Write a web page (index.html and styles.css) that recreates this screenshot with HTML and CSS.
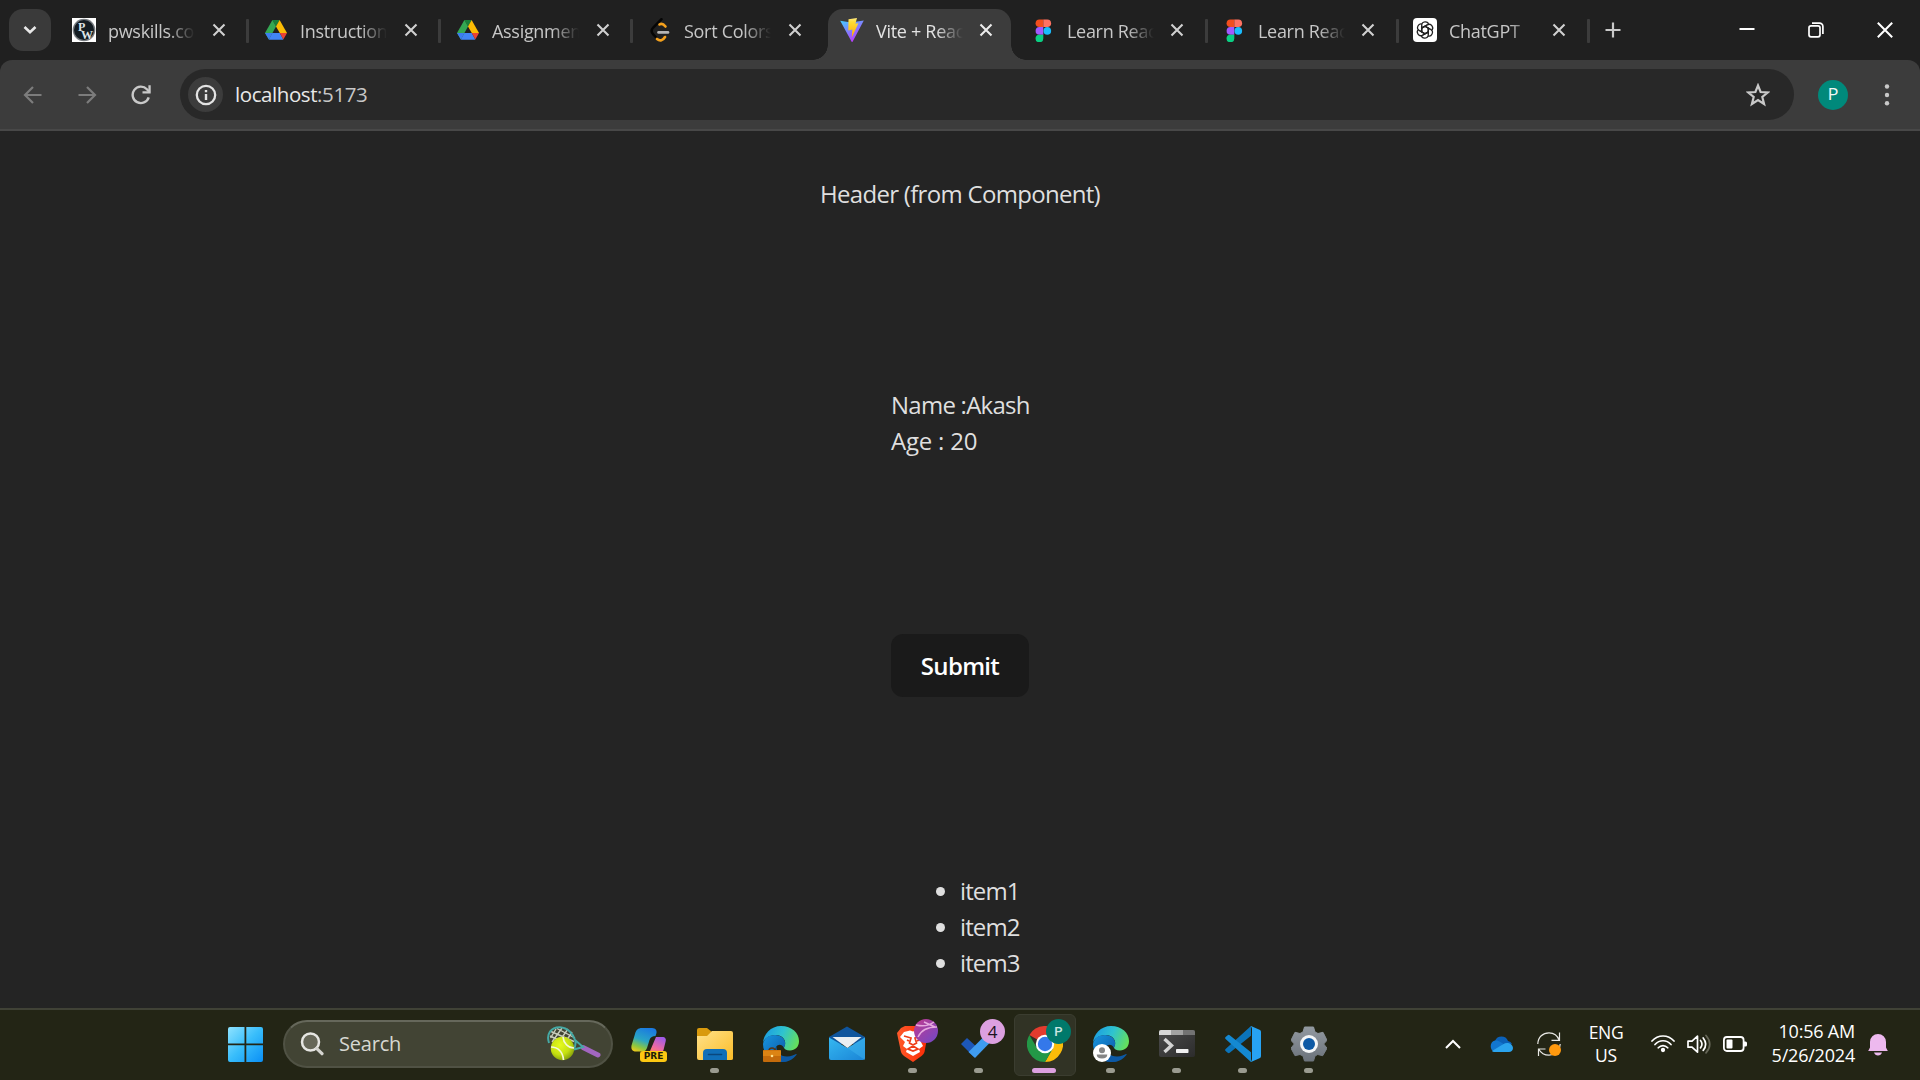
FILE: index.html
```html
<!DOCTYPE html>
<html lang="en">
<head>
<meta charset="utf-8">
<title>Vite + React</title>
<link rel="stylesheet" href="styles.css">
</head>
<body>
<svg class="defs" aria-hidden="true">
  <defs>
    <linearGradient id="win" x1="0" y1="0" x2="1" y2="1"><stop offset="0" stop-color="#8fe3ff"/><stop offset=".5" stop-color="#38bdfb"/><stop offset="1" stop-color="#0a8ff5"/></linearGradient>
    <linearGradient id="viteA" x1="0" y1="0" x2=".6" y2="1"><stop offset="0" stop-color="#41d1ff"/><stop offset="1" stop-color="#bd34fe"/></linearGradient>
    <linearGradient id="viteB" x1="0" y1="0" x2="0" y2="1"><stop offset="0" stop-color="#ffea83"/><stop offset=".2" stop-color="#ffdd35"/><stop offset="1" stop-color="#ffa800"/></linearGradient>
    <linearGradient id="copA" x1=".6" y1="0" x2=".2" y2="1"><stop offset="0" stop-color="#1b7be0"/><stop offset=".5" stop-color="#2aa6c4"/><stop offset=".8" stop-color="#8cc63f"/><stop offset="1" stop-color="#e8c81c"/></linearGradient>
    <linearGradient id="copB" x1=".7" y1="0" x2=".2" y2="1"><stop offset="0" stop-color="#a05be8"/><stop offset=".6" stop-color="#ef6aa0"/><stop offset="1" stop-color="#ff8a50"/></linearGradient>
    <linearGradient id="fold" x1="0" y1="0" x2="1" y2="1"><stop offset="0" stop-color="#ffe18a"/><stop offset="1" stop-color="#fbbd28"/></linearGradient>
    <linearGradient id="edgeTop" x1="0" y1=".3" x2="1" y2=".6"><stop offset="0" stop-color="#1b9de2"/><stop offset=".5" stop-color="#2fc3cf"/><stop offset="1" stop-color="#66e05a"/></linearGradient>
    <linearGradient id="edgeLow" x1="0" y1="0" x2="1" y2="1"><stop offset="0" stop-color="#1796e0"/><stop offset="1" stop-color="#0b4f9e"/></linearGradient>
    <linearGradient id="mail" x1="0" y1="0" x2="1" y2="1"><stop offset="0" stop-color="#35b8f1"/><stop offset="1" stop-color="#1a84d6"/></linearGradient>
    <linearGradient id="brave" x1="0" y1="0" x2="1" y2="0"><stop offset="0" stop-color="#ff5a2a"/><stop offset="1" stop-color="#fb2b05"/></linearGradient>
    <linearGradient id="ball" x1="0" y1="0" x2="1" y2="1"><stop offset="0" stop-color="#c23a8e"/><stop offset="1" stop-color="#7048c8"/></linearGradient>
    <radialGradient id="tennis" cx=".4" cy=".35" r=".7"><stop offset="0" stop-color="#e6fa1e"/><stop offset=".6" stop-color="#c4df10"/><stop offset="1" stop-color="#7f9a0c"/></radialGradient>
    <linearGradient id="gear" x1="0" y1="0" x2="0" y2="1"><stop offset="0" stop-color="#9299a0"/><stop offset="1" stop-color="#6c737b"/></linearGradient>
    <linearGradient id="term" x1="0" y1="0" x2="1" y2="1"><stop offset="0" stop-color="#4c4c4c"/><stop offset="1" stop-color="#2c2c2c"/></linearGradient>
    <symbol id="close" viewBox="0 0 14 14"><path d="M1.500 1.500 12.500 12.500M12.500 1.500 1.500 12.500" fill="none" stroke="currentColor" stroke-width="2.100"/></symbol>
    <symbol id="drive" viewBox="0 0 24 24">
      <path d="M8.400 2.100h7.200L12 8.400z" fill="#188038"/><path d="M8.400 2.100 12 8.400 4.900 21.500 1 15z" fill="#34a853"/>
      <path d="M15.600 2.100 23 15h-7.200L12 8.400z" fill="#fbbc04"/>
      <path d="M8.300 15h7.500l3.500 6.400c-.4.300-.8.400-1.200.4H6.100c-.5 0-.9-.1-1.200-.4z" fill="#4285f4"/>
      <path d="M1 15h7.300L4.900 21.500z" fill="#3c7df0"/><path d="M15.800 15H23l-3.700 6.500z" fill="#ea4335"/>
    </symbol>
    <symbol id="figma" viewBox="0 0 24 24">
      <path d="M12.300 1.500H8.400a3.800 3.800 0 0 0 0 7.600h3.900z" fill="#f24e1e"/><path d="M12.300 1.500h4a3.800 3.800 0 0 1 0 7.600h-4z" fill="#ff7262"/>
      <path d="M12.300 9.100H8.400a3.800 3.800 0 0 0 0 7.600h3.900z" fill="#a259ff"/><circle cx="16.300" cy="12.900" r="3.800" fill="#1abcfe"/>
      <path d="M8.400 16.700h3.900v3.800a3.900 3.800 0 1 1-3.900-3.800z" fill="#0acf83"/>
    </symbol>
    <symbol id="edge" viewBox="0 0 36 36">
      <path d="M0 18C0 8 8 0 18 0c11 0 18 7 18 15 0 6-4 9.500-9 9.500-4 0-6-1.500-6-3 0-1 1.200-1.700 1.200-4.500 0-4-3.700-8-9.200-8C6 9 0 13 0 18z" fill="url(#edgeTop)"/>
      <path d="M0 18C1 12 6 8.900 12 8.900c6 0 10.200 4 10.200 8.300 0 2.800-1.200 3.600-1.200 4.800-2-4-6-4-8-1-3 6 3 14 12 14-2.500 1-5 1-7 1C8 36 0 28 0 18z" fill="url(#edgeLow)"/>
      <path d="M14 20c-1.500 6 3 10.500 10 10.500 4.500 0 7.500-1.700 8.600-2.300.8-.4 1.300.2.800.9C30 33.500 26.500 35.300 22.500 35.800 14 34 10.500 25 14 20z" fill="#0c59a4"/>
    </symbol>
  </defs>
</svg>

<div class="screen">
  <header class="tabstrip">
    <button class="tab-search" aria-label="Search tabs"><svg width="14" height="10" viewBox="0 0 14 10"><path d="M1.500 2 7 7.300 12.500 2" fill="none" stroke="#e8e8e8" stroke-width="2.600"/></svg></button>
    <nav class="tabs">
      <div class="tab"><svg class="fav" viewBox="0 0 24 24"><path fill="#fff" d="M0 0h24v24H0z"/><circle cx="12" cy="12" r="11.300" fill="#777c80"/><circle cx="12" cy="12" r="10" fill="#141c22"/><g class="monogram"><text x="6" y="12.500">P</text><text x="9" y="20.500">W</text></g></svg><span class="label">pwskills.com</span><svg class="x"><use href="#close"/></svg></div>
      <div class="tab"><svg class="fav"><use href="#drive"/></svg><span class="label">Instructions</span><svg class="x"><use href="#close"/></svg></div>
      <div class="tab"><svg class="fav"><use href="#drive"/></svg><span class="label">Assignments</span><svg class="x"><use href="#close"/></svg></div>
      <div class="tab no-sep"><svg class="fav" viewBox="0 0 24 24" fill="none" stroke-linecap="round"><path d="M13.500 1.200 5.200 9.500c-2 2.200-2 4.600 0 6.800l3 3.200" stroke="#050505" stroke-width="2.500"/><path d="M11.500 6.500c2-1.500 4-.5 6 2" stroke="#f5a11c" stroke-width="2.600"/><path d="M9 21c3 2.500 6 1.500 8-2" stroke="#f5a11c" stroke-width="2.600"/><path d="M10.500 14.400H20" stroke="#b5b5b5" stroke-width="2.600"/></svg><span class="label">Sort Colors</span><svg class="x"><use href="#close"/></svg></div>
      <div class="tab narrow active"><svg class="fav" viewBox="0 0 24 24"><path d="M.2 2.800 11 4.500 23.800 2.600 12.700 23.600q-.6 1-1.200 0z" fill="url(#viteA)"/><path d="M8.500 1.200 17 0l-1.600 5.800 3-.5-6.600 14.200.5-7.900-4 .8z" fill="url(#viteB)"/></svg><span class="label">Vite + React</span><svg class="x"><use href="#close"/></svg></div>
      <div class="tab narrow"><svg class="fav"><use href="#figma"/></svg><span class="label">Learn React</span><svg class="x"><use href="#close"/></svg></div>
      <div class="tab narrow"><svg class="fav"><use href="#figma"/></svg><span class="label">Learn React</span><svg class="x"><use href="#close"/></svg></div>
      <div class="tab narrow"><svg class="fav" viewBox="0 0 24 24"><rect width="24" height="24" rx="4" fill="#fff"/><g fill="none" stroke="#222" stroke-width="1.250"><path id="petal" d="M8.700 13.900V7.400c0-4.400 6.300-4.700 6.900-.8M8.700 10.100l3.400-2 5.300 3.100"/><use href="#petal" transform="rotate(60 12 12)"/><use href="#petal" transform="rotate(120 12 12)"/><use href="#petal" transform="rotate(180 12 12)"/><use href="#petal" transform="rotate(240 12 12)"/><use href="#petal" transform="rotate(300 12 12)"/></g></svg><span class="label">ChatGPT</span><svg class="x"><use href="#close"/></svg></div>
    </nav>
    <svg class="new-tab" viewBox="0 0 16 16"><path d="M8 .5v15M.5 8h15" stroke="#c9c9c9" stroke-width="2.200"/></svg>
    <div class="window-controls">
      <svg viewBox="0 0 16 16"><path d="M.5 7h15" stroke="#fff" stroke-width="2"/></svg>
      <svg viewBox="0 0 16 16" fill="none" stroke="#fff" stroke-width="1.700"><rect x="1" y="3.800" width="11" height="11" rx="2"/><path d="M4 1.200h7.500a3.400 3.400 0 0 1 3.400 3.400V12"/></svg>
      <svg viewBox="0 0 16 16"><path d="M.8.8 15.200 15.200M15.200.8.800 15.200" stroke="#fff" stroke-width="2"/></svg>
    </div>
  </header>

  <div class="toolbar">
    <svg class="nav-icon" viewBox="0 0 20 20"><path d="M18.500 10H2.500M10 2 2 10l8 8" fill="none" stroke="#7c7c7c" stroke-width="2.200"/></svg>
    <svg class="nav-icon" viewBox="0 0 20 20"><path d="M1.500 10h16M10 2l8 8-8 8" fill="none" stroke="#7c7c7c" stroke-width="2.200"/></svg>
    <svg class="nav-icon" viewBox="0 0 20 20"><path d="M17.700 12.300A8.200 8.200 0 1 1 15.900 4.300L18.500 7" fill="none" stroke="#c9c9c9" stroke-width="2.400"/><path d="M19.700.3v8.200h-8.200V6.300h5.900V.3z" fill="#c9c9c9"/></svg>
    <div class="omnibox">
      <span class="site-info"><svg width="22" height="22" viewBox="0 0 22 22"><circle cx="11" cy="11" r="9.200" fill="none" stroke="#e3e3e3" stroke-width="2.300"/><path d="M11 10v6M11 6v2.200" stroke="#e3e3e3" stroke-width="2.400"/></svg></span>
      <span class="url">localhost<span class="port">:5173</span></span>
      <svg class="star" viewBox="0 0 24 24"><path d="m12 2.500 2.600 6.500 7.200.5-5.500 4.500 1.800 7-6.100-3.900L5.900 21l1.800-7-5.500-4.500 7.200-.5z" fill="none" stroke="#c9c9c9" stroke-width="2.200"/></svg>
    </div>
    <span class="avatar">P</span>
    <svg class="menu" viewBox="0 0 6 22"><g fill="#c9c9c9"><circle cx="3" cy="2.500" r="2.200"/><circle cx="3" cy="11" r="2.200"/><circle cx="3" cy="19.300" r="2.200"/></g></svg>
  </div>

  <main class="page">
    <div class="page-header">Header (from Component)</div>
    <div class="person"><div>Name :Akash</div><div class="age">Age : 20</div></div>
    <button class="submit">Submit</button>
    <ul class="items"><li>item1</li><li>item2</li><li>item3</li></ul>
  </main>

  <footer class="taskbar">
    <svg class="start" viewBox="0 0 35 35"><path d="M2 0h14.500v16.500H0V2q0-2 2-2zM18.300 0H33q2 0 2 2v14.500H18.300zM0 18.300h16.500V35H2q-2 0-2-2zM18.300 18.300H35V33q0 2-2 2H18.300z" fill="url(#win)"/></svg>
    <div class="search">
      <svg class="magnifier" viewBox="0 0 24 24"><circle cx="10.500" cy="10" r="8.500" fill="#666758" stroke="#e6e6e2" stroke-width="2.500"/><path d="m16.600 16.300 5.400 5.400" stroke="#d5d5d0" stroke-width="3.200" stroke-linecap="round"/></svg>
      <span class="search-text">Search</span>
      <svg class="racket" viewBox="0 0 54 36">
        <path d="m36 21.500 15 7.500" stroke="#a266c0" stroke-width="5" stroke-linecap="round"/>
        <path d="M4 5.500l23 10M3 10l20 9M10 2.500 28 12M5 16 15 2M11 17 21 3M18 17l7-11M3.500 12 9 3" stroke="#c9cdbc" stroke-width="1.400"/>
        <path d="M2 17C-1 8 4 1 13 1.200 21 1.600 26 8 28 14l8 7-9 2.500M28 14c1 3 0 7-1 9" fill="none" stroke="#45a9a5" stroke-width="2"/>
        <circle cx="15.500" cy="22.500" r="11.700" fill="url(#tennis)"/><path d="M4 21c7 0 12 5 12.500 13M16 11c.5 6 5 11 11 11" fill="none" stroke="#f5f8d5" stroke-width="1.700"/>
      </svg>
    </div>
    <div class="apps">
      <div class="app"><svg viewBox="0 0 36 36"><path d="M11 2h10c4 0 5 3 4.500 5l-1 3c-3 0-5 1-6 4l-2.500 8c-1 2.500-2 3.500-5 3.500H5c-4 0-5-2.500-4.500-6L4 8c1-4 3-6 7-6z" fill="url(#copA)"/><path d="M25 11h6c3.500 0 4.500 2 3.500 5l-2 8c-1 3-3 4-6 4H17l2-3z" fill="url(#copB)"/></svg><span class="pre">PRE</span></div>
      <div class="app running"><svg viewBox="0 0 36 36"><path d="M0 4q0-2 2-2h8l5 4-4 5H0z" fill="#d99a0d"/><path d="M0 10h10l5-5h19q2 0 2 2v25.500q0 1.500-2 1.500H2q-2 0-2-2z" fill="url(#fold)"/><path d="M6 34V27q0-4 4-4h16q4 0 4 4v7z" fill="#106fb8"/><path d="M11.500 28.500h13" stroke="#0a477d" stroke-width="1.600" stroke-linecap="round"/></svg></div>
      <div class="app"><svg viewBox="0 0 36 36"><use href="#edge"/><path d="M6 25q0-3 3-3t3 3" fill="none" stroke="#5b3311" stroke-width="1.500"/><rect y="24" width="18" height="12" rx="1" fill="#c46b0b"/><path d="M0 24.500h18V30H0z" fill="#dc8414"/><circle cx="9" cy="30" r="1.300" fill="#ffe08a"/></svg></div>
      <div class="app"><svg viewBox="0 0 36 36"><path d="M18 .5 36 11v7H0v-7z" fill="#0f559d"/><path d="M0 11.500V32q0 2 2 2h32q2 0 2-2V11.500L18.500 22z" fill="url(#mail)"/><path d="M3.500 11h29L18.500 22z" fill="#e9eef2"/><path d="M18.500 22 36 34V11.500z" fill="#40b5f0" opacity=".45"/></svg></div>
      <div class="app running"><svg viewBox="0 0 36 36"><path d="M10 0h13l4 3 4 1 1.500 5-1 6-2 11q-.5 2-3 4L18 36l-9-6q-2.500-2-3-4L3 12 2 7l4-5z" fill="url(#brave)"/><path d="m9 6 6-1.500 3 1 3-1L27 6l3 5-4 5 2 4-4 3 1 3-7 4-7-4 1-3-4-3 2-4-5-5z" fill="#fff"/><path d="m9 10 7 2-1.500 5 3.500 2 3.500-2-1.500-5 6-2M13 23l5-3 5 3-5 2zM12 14l2 1M24 14l-2 1" fill="none" stroke="#ef3d17" stroke-width="1.700"/></svg><svg class="sticker" viewBox="0 0 24 24"><circle cx="12" cy="12" r="12" fill="url(#ball)"/><path d="M2 6c8 2 14 0 18-3M4 18c3-7 9-10 19-10M10 3l11 5" fill="none" stroke="#e6a8df" stroke-width="1.500"/></svg></div>
      <div class="app running"><svg viewBox="0 0 36 36"><path d="m0 18 6-6 13 12-6 7z" fill="#1d57b8"/><path d="M7.500 26 30 3.500l6 5.800L14 32z" fill="#3f9cf0"/></svg><span class="badge">4</span></div>
      <div class="app running current"><svg viewBox="0 0 36 36"><path d="M18 18 2.400 9A18 18 0 0 1 33.600 9z" fill="#e33b2e"/><path d="M18 9h15.600A18 18 0 0 1 18 36l7.800-13.500z" fill="#fbbc09"/><path d="M2.400 9A18 18 0 0 0 18 36l7.800-13.500L18 25l-7.800-2.500z" fill="#239847"/><circle cx="18" cy="18" r="9.200" fill="#fff"/><circle cx="18" cy="18" r="7.200" fill="#3478ea"/></svg><span class="badge profile">P</span></div>
      <div class="app running"><svg viewBox="0 0 36 36"><use href="#edge"/><circle cx="9" cy="27" r="9" fill="#fff"/><circle cx="9" cy="24.300" r="3" fill="#858585"/><path d="M3.700 28.600h10.600q0 4-5.300 4t-5.300-4z" fill="#858585"/></svg></div>
      <div class="app running"><svg viewBox="0 0 36 36"><rect y="4" width="36" height="27" rx="2" fill="url(#term)"/><path d="M0 9V6q0-2 2-2h10v5z" fill="#d6d6d6"/><path d="M12 4h12v5H12z" fill="#a3a3a3"/><path d="M24 4h10q2 0 2 2v3H24z" fill="#737373"/><path d="m5.500 13 7 6.500-7 6.500" fill="none" stroke="#d4d4d4" stroke-width="3.400"/><rect x="17" y="23" width="12.500" height="4" rx=".7" fill="#f0f0f0"/></svg></div>
      <div class="app running"><svg viewBox="0 0 36 36"><path d="M26 0v9.800L4.700 26.800q-1 .8-2 0L.6 25q-1-1 0-2z" fill="#0b74ba"/><path d="M26 36V26.200L4.700 9.200q-1-.8-2 0L.6 11q-1 1 0 2z" fill="#1489d2"/><path d="M26 0 35 4q1 .5 1 2v24q0 1.500-1 2l-9 4c-1 .3 1-1 1-3V3c0-2-2-3-1-3z" fill="#27a3f3"/></svg></div>
      <div class="app running"><svg viewBox="0 0 36 36"><path d="m13.500 1 9 0 1.500 5 3 1.500 5-1.200 4 8-3.300 3.700 3.300 4.200-4.300 7.500-5-1.200-2.700 1.500L22.500 35h-9L12 30l-3-1.500-5 1.200-4-7.500L3.300 18 0 14.300l4-8 5 1.200L12 6z" fill="url(#gear)" stroke="url(#gear)" stroke-linejoin="round"/><circle cx="18" cy="18" r="9" fill="#f4f6f7"/><circle cx="18" cy="18" r="6" fill="#0e5aa5"/></svg></div>
    </div>
    <div class="tray">
      <svg class="chevron" viewBox="0 0 16 10"><path d="m1 9 7-7 7 7" fill="none" stroke="#fff" stroke-width="2"/></svg>
      <svg class="onedrive" viewBox="0 0 24 24"><path d="M6 9a7 7 0 0 1 13 0 5 5 0 0 1 4 3L10 18z" fill="#0b61b8"/><path d="M6 20a6 6 0 0 1 0-11.500c3-.5 5 1 8 3L10 20z" fill="#1276cf"/><path d="M3 19 14.500 12c3-2 9-1 9.500 4 0 2.500-2 4-4 4H6c-1.500 0-2.500-.4-3-1z" fill="#2ba4ee"/></svg>
      <svg class="sync" viewBox="0 0 24 24"><path d="M.8 12C1 5 6 .8 12 .8c5 0 8.500 2.700 10.300 7.500M22.500.5V8.400h-8M23.200 12C22.500 20 17 23.200 12 23.200c-4.500 0-8-2-10.200-6M1.500 24v-7h7" fill="none" stroke="#e8e8e4" stroke-width="1.200"/><circle cx="18" cy="18" r="6" fill="#ff990e"/></svg>
      <div class="lang"><span>ENG</span><span>US</span></div>
      <svg class="wifi" viewBox="0 0 24 24" fill="none" stroke="#fff" stroke-width="1.700" stroke-linecap="round"><path d="M1 9c6-6.700 16-6.700 22 0M4 12.500c4.500-5 11.500-5 16 0M7.300 15.800c2.700-3 6.700-3 9.400 0"/><circle cx="12" cy="18" r="1.300" fill="#fff"/></svg>
      <svg class="speaker" viewBox="0 0 24 24" fill="none" stroke="#fff" stroke-width="1.700" stroke-linecap="round" stroke-linejoin="round"><path d="M1 9.200v6h4l5.500 5V4.200l-5.500 5z"/><path d="M13.500 8.500q3 3.700 0 7.400M16.200 6q5 6.200 0 12.400"/><path d="M19 3.500q7.500 8.700 0 17.400" stroke="#666758"/></svg>
      <svg class="battery" viewBox="0 0 24 24"><rect x=".9" y="5" width="19.700" height="14" rx="3" fill="none" stroke="#fff" stroke-width="1.800"/><rect x="3.500" y="7.500" width="6" height="9" rx="1" fill="#fff"/><path d="M21 9.500h1.500q1.500 0 1.500 1.500v2q0 1.500-1.500 1.500H21z" fill="#fff"/></svg>
      <div class="clock"><span class="time">10:56 AM</span><span class="date">5/26/2024</span></div>
      <svg class="bell" viewBox="0 0 20 24"><path d="M2 10a8 8 0 0 1 16 0v5.500l1.800 3.500H.2L2 15.500zM6 20.500h8q-1 3-4 3t-4-3z" fill="#edb9ee"/></svg>
    </div>
  </footer>
</div>
</body>
</html>
```

FILE: styles.css
```css
* { box-sizing: border-box; }
body { margin: 0; background: #242424; font-family: "Open Sans", "Noto Sans", sans-serif; }
button { border: 0; padding: 0; font-family: inherit; }
svg { display: block; flex: none; }
.defs { position: absolute; width: 0; height: 0; }
.screen { width: 1920px; height: 1080px; overflow: hidden; display: flex; flex-direction: column; background: #202020; }

/* Tab strip */
.tabstrip { height: 60px; display: flex; align-items: center; padding-left: 9px; background: #202020; flex: none; }
.tab-search { width: 42px; height: 42px; border-radius: 14px; background: #3a3a3a; display: flex; align-items: center; justify-content: center; }
.tabs { display: flex; align-self: stretch; margin-left: 9px; }
.tab { position: relative; width: 192px; height: 60px; display: flex; align-items: center; padding-left: 12px; color: #c7c7c7; }
.tab.narrow { width: 191px; }
.tab::after { content: ""; position: absolute; left: 186px; top: 19px; width: 3px; height: 24px; border-radius: 1px; background: #3c3c3c; }
.tab.no-sep::after { display: none; }
.fav { width: 24px; height: 24px; }
.monogram { fill: #dfe3e6; font: bold 12px "Liberation Serif", serif; }
.label { width: 87px; margin-left: 12px; padding-top: 2px; font-size: 18px; line-height: 24px; letter-spacing: -.3px; white-space: nowrap; overflow: hidden; -webkit-mask-image: linear-gradient(90deg, #000 60px, transparent 87px); mask-image: linear-gradient(90deg, #000 60px, transparent 87px); }
.x { width: 14px; height: 14px; margin-left: 17px; color: #d0d0d0; }
.narrow .x { margin-left: 16px; }
.tab.active { color: #e3e3e3; }
.tab.active .x { color: #ececec; }
.tab.active .fav, .tab.active .label, .tab.active .x { z-index: 1; }
.tab.active::before { content: ""; position: absolute; left: 0; top: 9px; width: 183px; height: 51px; border-radius: 15px 15px 0 0; background: #3c3c3c; }
.tab.active::after { left: -15px; top: 45px; width: 213px; height: 15px; border-radius: 0; background: radial-gradient(circle at 0 0, transparent 14.500px, #3c3c3c 15px) left / 15px 15px no-repeat, radial-gradient(circle at 100% 0, transparent 14.500px, #3c3c3c 15px) right / 15px 15px no-repeat; }
.new-tab { width: 16px; height: 16px; margin-left: 13px; }
.window-controls { display: flex; gap: 53px; margin-left: auto; margin-right: 27px; }
.window-controls svg { width: 16px; height: 16px; }

/* Toolbar */
.toolbar { height: 71px; flex: none; display: flex; align-items: center; padding: 0 30px 0 23px; background: #3c3c3c; border-bottom: 2px solid #484848; border-radius: 12px 12px 0 0; }
.nav-icon { width: 20px; height: 20px; margin-right: 34px; }
.nav-icon + .nav-icon + .nav-icon { margin-right: 29px; }
.omnibox { width: 1614px; height: 51px; border-radius: 26px; background: #282828; display: flex; align-items: center; padding: 0 24px 0 8px; }
.site-info { width: 35px; height: 35px; border-radius: 50%; background: #3c3c3c; display: flex; align-items: center; justify-content: center; }
.url { margin-left: 12px; padding-bottom: 2px; font-size: 20.500px; line-height: 28px; letter-spacing: -.42px; color: #e8e8e8; }
.port { color: #c7c7c7; }
.star { width: 24px; height: 24px; margin-left: auto; }
.avatar { width: 30px; height: 30px; margin-left: 24px; border-radius: 50%; background: #00897b; color: #f0f7f5; font: 16px/30px Roboto, sans-serif; text-align: center; }
.menu { width: 6px; height: 22px; margin-left: auto; }

/* Page */
.page { height: 877px; flex: none; display: flex; flex-direction: column; align-items: center; background: #242424; color: #dfdfdf; font-size: 24px; line-height: 36px; padding-top: 45px; letter-spacing: -.7px; }
.page-header { white-space: nowrap; }
.person { width: 138px; margin-top: 175px; white-space: nowrap; letter-spacing: -.75px; }
.age { letter-spacing: -.2px; }
.submit { width: 138px; height: 63px; margin-top: 175px; border-radius: 12px; background: #1a1a1a; color: #fff; font-size: 24px; font-weight: 600; letter-spacing: -.7px; }
.items { width: 138px; margin: 176px 0 0; padding: 0 0 0 69px; list-style: none; }
.items li { display: flex; align-items: center; margin-left: -24px; gap: 15px; letter-spacing: -.9px; }
.items li::before { content: ""; width: 9px; height: 9px; border-radius: 50%; background: #dfdfdf; }

/* Taskbar */
.taskbar { height: 72px; flex: none; display: flex; align-items: center; padding: 0 32px 2px 228px; background: #232515; border-top: 2px solid #404236; }
.start { width: 35px; height: 35px; margin-right: 20px; }
.search { width: 330px; height: 48px; border-radius: 24px; background: #424434; border: 2px solid #505244; border-top-color: #66685b; display: flex; align-items: center; padding: 0 10px 0 15px; }
.magnifier { width: 24px; height: 24px; }
.search-text { margin-left: 15px; font-size: 20px; line-height: 28px; letter-spacing: -.2px; color: #d7d8d1; }
.racket { width: 54px; height: 36px; margin-left: auto; }
.apps { display: flex; margin-left: 3px; }
.app { position: relative; width: 66px; height: 60px; display: flex; align-items: center; justify-content: center; }
.app > svg { width: 36px; height: 36px; }
.app.running::after { content: ""; position: absolute; left: 28px; bottom: 1px; width: 9px; height: 5px; border-radius: 3px; background: #9a9b90; }
.app.current::before { content: ""; position: absolute; left: 2px; top: 0; width: 60px; height: 60px; border-radius: 6px; background: #313325; border: 1px solid #3b3d30; }
.app.current > svg { z-index: 1; }
.app.current::after { left: 20px; width: 24px; background: #dca0e0; }
.pre { position: absolute; left: 24px; top: 37px; width: 27px; height: 11px; border-radius: 3px; background: #fcc812; color: #201c08; font: bold 9px/11px "DejaVu Sans", sans-serif; text-align: center; }
.app > .sticker { position: absolute; left: 34px; top: 5px; width: 24px; height: 24px; }
.badge { position: absolute; left: 34px; top: 5px; width: 25px; height: 25px; border-radius: 50%; background: #dca0e0; color: #1c1420; font-size: 17px; line-height: 25px; text-align: center; z-index: 2; }
.badge.profile { background: #00796b; color: #c9e6e1; font: 500 13px/25px Roboto, sans-serif; }
.tray { display: flex; align-items: center; margin-left: auto; color: #fff; }
.chevron { width: 16px; height: 10px; margin-right: 28px; }
.onedrive { width: 24px; height: 24px; margin-right: 24px; }
.sync { width: 24px; height: 24px; margin-right: 22px; }
.lang { width: 46px; margin-right: 22px; display: flex; flex-direction: column; align-items: center; font-size: 17.500px; line-height: 23px; letter-spacing: -.3px; }
.wifi, .speaker { width: 24px; height: 24px; margin-right: 12px; }
.battery { width: 24px; height: 24px; }
.clock { width: 108px; padding-bottom: 2px; display: flex; flex-direction: column; align-items: flex-end; font-size: 18px; line-height: 24px; letter-spacing: -.2px; }
.bell { width: 20px; height: 24px; margin-left: 13px; }
```
